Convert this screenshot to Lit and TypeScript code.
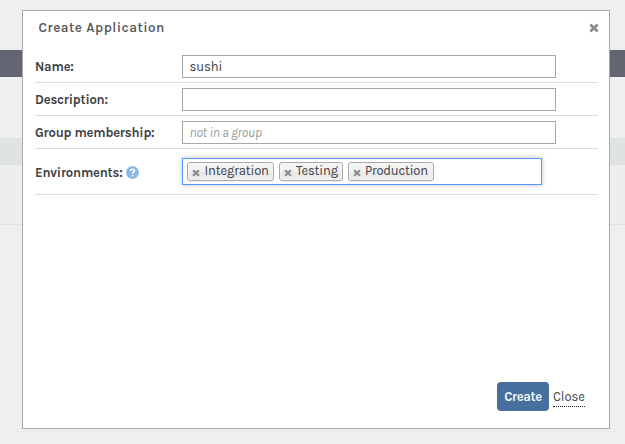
import { LitElement, html, css } from "lit";
import { customElement } from "lit/decorators.js";

const cross = html`<svg class="cross" viewBox="0 0 9 9">
  <path d="M1.2 1.4 L7.8 7.6 M7.8 1.4 L1.2 7.6" />
</svg>`;

@customElement("app-root")
export class AppRoot extends LitElement {
  static styles = css`
    :host {
      display: grid;
      width: 625px;
      height: 444px;
      overflow: hidden;
      background: #efefef;
      font: 13px/16px Karla, "Work Sans", Roboto, "Liberation Sans", sans-serif;
      color: #404047;
    }
    * { box-sizing: border-box; }
    .page, .dialog { grid-area: 1 / 1; }
    .page { display: grid; grid-template-rows: 50px 27px 61px 27px 59px 1px 1fr; }
    .nav { background: #636672; }
    .band { background: #dfe3e3; }
    .body { background: #eeeeee; }
    .rule { background: #e2e2e2; }
    .dialog {
      display: flex;
      flex-direction: column;
      width: 588px;
      height: 419px;
      margin: 10px 0 0 22px;
      padding: 0 11px 0 12px;
      background: #fff;
      border: 1px solid #a8a8a8;
    }
    header {
      display: flex;
      justify-content: space-between;
      height: 39px;
      padding: 9px 0 0 4px;
    }
    h1 {
      margin: 0 0 0 -0.5px;
      font-size: 13.5px;
      line-height: 16px;
      font-weight: 600;
      letter-spacing: 0.5px;
      color: #55565a;
    }
    .cross { width: 9px; height: 9px; fill: none; stroke: #8c8c8c; stroke-width: 2.6; flex: none; }
    header .cross { width: 10px; height: 10px; margin: 3px -1px 0 0; }
    .row {
      display: flex;
      align-items: center;
      width: 563px;
      height: 33px;
      border-bottom: 1px solid #dcdcdc;
    }
    .row.tall { height: 46px; }
    .label {
      display: flex;
      align-items: center;
      width: 147px;
      padding-top: 2px;
      font-weight: 700;
      letter-spacing: -0.2px;
      color: #404045;
      white-space: nowrap;
    }
    .field {
      width: 374px;
      height: 23px;
      padding: 3px 6.5px;
      border: 1px solid #a8a8a8;
      letter-spacing: -0.1px;
      line-height: 16px;
    }
    .row .field { margin-top: 1px; }
    .row .hint { font-style: italic; color: #999; letter-spacing: -0.18px; }
    .help { width: 13px; height: 13px; margin-left: 3px; }
    .tags {
      display: flex;
      gap: 5px;
      width: 360px;
      height: 27px;
      padding: 3px 4px;
      border: 1px solid #5897fb;
      box-shadow: 0 0 5px rgba(0, 0, 0, 0.25);
    }
    .tag {
      display: flex;
      height: 19px;
      padding-left: 4px;
      border: 1px solid #aaa;
      border-radius: 3px;
      background: linear-gradient(#f4f4f4 20%, #f0f0f0 50%, #e8e8e8 52%, #eee);
      box-shadow: 0 0 2px #fff inset, 0 1px 0 rgba(0, 0, 0, 0.05);
      line-height: 16px;
      letter-spacing: -0.15px;
      white-space: nowrap;
    }
    .tag .cross { width: 8px; height: 8px; margin: 6px 4.5px 0 0; }
    .wide { width: 87px; }
    .mid { width: 64px; padding-left: 3.5px; }
    .last { width: 86px; padding-left: 3.5px; letter-spacing: -0.22px; }
    footer {
      display: flex;
      margin: auto 0 17px;
      padding-left: 462px;
      gap: 4px;
      align-items: flex-start;
    }
    button {
      width: 52px;
      height: 29px;
      padding: 0;
      border: 0;
      border-radius: 4px;
      background: #47709e;
      color: #f2f6fa;
      font: inherit;
      font-weight: 700;
      letter-spacing: -0.4px;
    }
    .close {
      margin-top: 7px;
      height: 18px;
      width: 32px;
      color: #45454c;
      letter-spacing: -0.1px;
      border-bottom: 1px dotted #222;
    }
  `;

  private tag(text: string, size: string) {
    return html`<div class="tag ${size}">${cross}<span>${text}</span></div>`;
  }

  render() {
    return html`
      <div class="page">
        <div></div><div class="nav"></div><div></div><div class="band"></div>
        <div class="body"></div><div class="rule"></div><div></div>
      </div>
      <div class="dialog">
        <header><h1>Create Application</h1>${cross}</header>
        <div class="row"><div class="label">Name:</div><div class="field">sushi</div></div>
        <div class="row"><div class="label">Description:</div><div class="field"></div></div>
        <div class="row"><div class="label">Group membership:</div><div class="field hint">not in a group</div></div>
        <div class="row tall">
          <div class="label"><span>Environments:</span>
            <svg class="help" viewBox="0 0 13 13">
              <circle cx="6.5" cy="6.5" r="6.5" fill="#8bb9e6" />
              <path d="M4.6 5 C4.6 2.6 8.4 2.6 8.4 4.9 C8.4 6.2 6.5 6.2 6.5 7.8 M6.5 8.9 V10.3" fill="none" stroke="#fff" stroke-width="1.5" />
            </svg>
          </div>
          <div class="tags">
            ${this.tag("Integration", "wide")}${this.tag("Testing", "mid")}${this.tag("Production", "last")}
          </div>
        </div>
        <footer><button>Create</button><span class="close">Close</span></footer>
      </div>
    `;
  }
}
